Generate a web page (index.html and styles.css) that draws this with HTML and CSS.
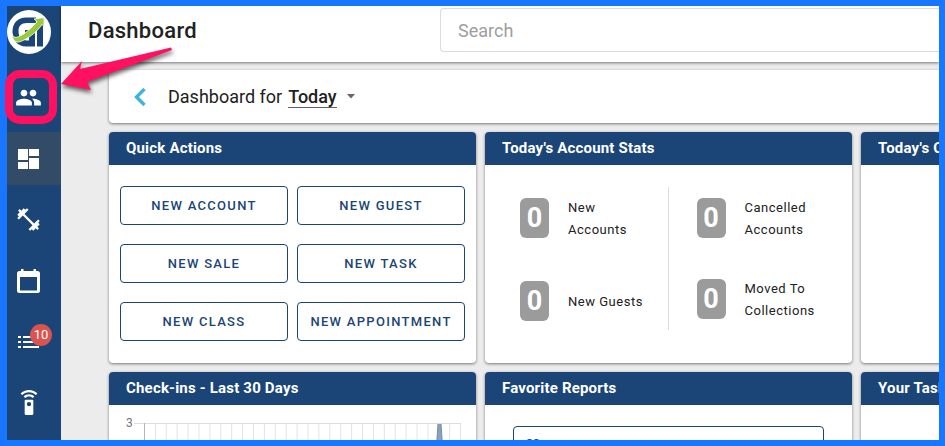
FILE: index.html
```html
<!DOCTYPE html>
<html lang="en">
<head>
<meta charset="utf-8">
<title>Dashboard</title>
<meta name="viewport" content="width=device-width, initial-scale=1">
<link rel="stylesheet" href="styles.css">
</head>
<body>
<div class="frame">
  <nav class="sidebar" aria-label="Main">
    <a class="logo" href="#" aria-label="Home">
      <svg width="44" height="44" viewBox="0 0 44 44">
        <circle cx="22" cy="22" r="22" fill="#fff"/>
        <path d="M29 7.500V13H20C14 13 11.500 16 11.500 21C11.500 27 14.500 30.500 20 30.500H22V25H18V20H28V36.500H19C10.500 36.500 5.500 30 5.500 21.500C5.500 13 11 7.500 19 7.500Z" fill="#1a4576"/>
        <path d="M30 20L36 13V36.500H30Z" fill="#1a4576"/>
        <path d="M5 24C6 33.500 11 33 16 30.500C24 26.500 31 20.500 35 14.500L37 16.500V7.500L27 9L30 11.500C25 18 19 23 13 26C9 28 6.500 28 5 24Z" fill="#9ac93c" stroke="#fff" stroke-width=".8"/>
      </svg>
    </a>
    <a class="item" href="#" aria-label="People">
      <svg width="27" height="27" viewBox="0 0 24 24"><path d="M16 11c1.660 0 2.990-1.340 2.990-3S17.660 5 16 5s-3 1.340-3 3 1.340 3 3 3zm-8 0c1.660 0 2.990-1.340 2.990-3S9.660 5 8 5 5 6.340 5 8s1.340 3 3 3zm0 2c-2.330 0-7 1.170-7 3.500V19h14v-2.500c0-2.330-4.670-3.500-7-3.500zm8 0c-.290 0-.620.020-.970.050 1.160.840 1.970 1.970 1.970 3.450V19h6v-2.500c0-2.330-4.670-3.500-7-3.500z"/></svg>
    </a>
    <a class="item active" href="#" aria-label="Dashboard">
      <svg width="21" height="20" viewBox="0 0 21 20"><path d="M0 0H10V11H0ZM0 13H10V20H0ZM11 0H21V7H11ZM11 9H21V20H11Z"/></svg>
    </a>
    <a class="item" href="#" aria-label="Fitness">
      <svg width="27" height="27" viewBox="0 0 24 24"><path d="M20.570 14.860L22 13.430L20.570 12L17 15.570L8.430 7L12 3.430L10.570 2L9.140 3.430L7.710 2L5.570 4.140L4.140 2.710L2.710 4.140L4.140 5.570L2 7.710L3.430 9.140L2 10.570L3.430 12L7 8.430L15.570 17L12 20.570L13.430 22L14.860 20.570L16.290 22L18.430 19.860L19.860 21.290L21.290 19.860L19.860 18.430L22 16.290Z"/></svg>
    </a>
    <a class="item" href="#" aria-label="Calendar">
      <svg width="23" height="24" viewBox="0 0 23 24"><path fill-rule="evenodd" d="M4 0H6.500V2H16.500V0H19V2H20.500Q23 2 23 4.500V21.500Q23 24 20.500 24H2.500Q0 24 0 21.500V4.500Q0 2 2.500 2H4ZM3 8V21.500H20V8Z"/></svg>
    </a>
    <a class="item" href="#" aria-label="Lists, 10 new">
      <svg width="21" height="12" viewBox="0 0 21 12"><path d="M0 0H3V2H0ZM5 0H21V2H5ZM0 5H3V7H0ZM5 5H21V7H5ZM0 10H3V12H0ZM5 10H21V12H5Z"/></svg>
      <span class="count">10</span>
    </a>
    <a class="item" href="#" aria-label="Remote">
      <svg width="26" height="26" viewBox="0 0 24 24"><path d="M12 0C8.960 0 6.210 1.230 4.220 3.220L5.630 4.630C7.260 3 9.500 2 12 2S16.740 3 18.360 4.640L19.770 3.230C17.790 1.230 15.040 0 12 0M7.050 6.050L8.460 7.460C9.370 6.560 10.620 6 12 6S14.630 6.560 15.540 7.460L16.950 6.050C15.680 4.780 13.930 4 12 4S8.320 4.780 7.050 6.050M12 15A2 2 0 0 1 12 11A2 2 0 0 1 12 15M15 9H9A1 1 0 0 0 8 10V22A1 1 0 0 0 9 23H15A1 1 0 0 0 16 22V10A1 1 0 0 0 15 9Z"/></svg>
    </a>
  </nav>

  <div class="page">
    <header class="topbar">
      <h1>Dashboard</h1>
      <input class="search" type="search" placeholder="Search" aria-label="Search">
    </header>

    <main class="content">
      <section class="period">
        <button class="back" type="button" aria-label="Previous">
          <svg width="12" height="18" viewBox="0 0 12 18"><path d="M10.500 1L2.500 9L10.500 17" fill="none" stroke="#40b4d8" stroke-width="3.400"/></svg>
        </button>
        <span>Dashboard for</span>
        <button class="range" type="button"><span>Today</span>
          <svg width="8" height="5" viewBox="0 0 8 5"><path d="M0 0H8L4 4.500Z" fill="#666"/></svg>
        </button>
      </section>

      <div class="cards">
        <section class="card">
          <h2>Quick Actions</h2>
          <div class="actions">
            <button type="button">NEW ACCOUNT</button>
            <button type="button">NEW GUEST</button>
            <button type="button">NEW SALE</button>
            <button type="button">NEW TASK</button>
            <button type="button">NEW CLASS</button>
            <button type="button">NEW APPOINTMENT</button>
          </div>
        </section>

        <section class="card">
          <h2>Today's Account Stats</h2>
          <div class="stats">
            <div class="column">
              <div class="stat"><b>0</b><span>New Accounts</span></div>
              <div class="stat"><b>0</b><span>New Guests</span></div>
            </div>
            <div class="column">
              <div class="stat"><b>0</b><span>Cancelled Accounts</span></div>
              <div class="stat"><b>0</b><span>Moved To Collections</span></div>
            </div>
          </div>
        </section>

        <section class="card">
          <h2>Today's Classes</h2>
        </section>

        <section class="card">
          <h2>Check-ins - Last 30 Days</h2>
          <div class="chart">
            <span>3</span>
            <svg width="328" height="120" viewBox="0 0 328 120">
              <defs><pattern id="days" x="10" width="10.900" height="120" patternUnits="userSpaceOnUse"><path d="M.5 0V120" stroke="#e2e2e2"/></pattern></defs>
              <rect x="10" width="318" height="120" fill="url(#days)"/>
              <path d="M0 .5H327" stroke="#dcdcdc"/>
              <path d="M10.500 0V120" stroke="#b5b5b5"/>
              <path d="M304 1H307L315 119H296Z" fill="#8ba2ba"/>
              <path d="M304 1L296 119M307 1L315 119" stroke="#6e8cac" fill="none"/>
            </svg>
          </div>
        </section>

        <section class="card">
          <h2>Favorite Reports</h2>
          <div class="reports">
            <button class="report" type="button" aria-label="Favorite report">
              <svg width="16" height="15" viewBox="0 0 16 15"><path d="M8 15L1.500 8.500C-1.500 5 1 0 4.500 0Q7 0 8 2Q9 0 11.500 0C15 0 17.500 5 14.500 8.500Z" fill="#1a4576"/></svg>
            </button>
          </div>
        </section>

        <section class="card">
          <h2>Your Tasks</h2>
        </section>
      </div>
    </main>
  </div>
</div>

<svg class="callout" width="180" height="130" viewBox="0 0 180 130" aria-hidden="true">
  <rect x="9" y="74" width="44" height="46" rx="11" fill="none" stroke="#ff1060" stroke-width="8"/>
  <path class="arrow" d="M61 84L82 61L80 69L171 47.500L172 50L87 82L91 90Z" fill="#ff1060"/>
</svg>
</body>
</html>
```
FILE: styles.css
```css
* {
  box-sizing: border-box;
}

body {
  margin: 0;
  font-family: Roboto, "Liberation Sans", sans-serif;
  color: #212121;
}

button {
  font: inherit;
  cursor: pointer;
}

svg {
  display: block;
  flex: none;
}

.frame {
  display: flex;
  height: 100vh;
  overflow: hidden;
  border: 6px solid #1976ff;
  border-left-width: 7px;
  background: #ececec;
}

.sidebar {
  display: flex;
  flex: none;
  flex-direction: column;
  gap: 8px;
  width: 54px;
  padding-top: 4px;
  background: #1a4576;
}

.logo {
  width: 44px;
  margin-bottom: 9px;
}

.item {
  position: relative;
  display: flex;
  flex: none;
  align-items: center;
  justify-content: center;
  height: 53px;
  padding-right: 11px;
}

.item svg {
  fill: #fff;
}

.item.active {
  background: #324b66;
}

.count {
  position: absolute;
  top: 9px;
  left: 23px;
  width: 22px;
  height: 22px;
  border-radius: 50%;
  background: #d9534f;
  color: #fff;
  font-size: 13px;
  line-height: 22px;
  text-align: center;
}

.page {
  flex: 1;
  min-width: 0;
}

.topbar {
  display: grid;
  grid-template-columns: 352px 1fr;
  align-items: start;
  height: 56px;
  padding: 2px 0 0 27px;
  background: #fff;
  box-shadow: 0 1px 3px rgba(0, 0, 0, 0.5);
}

h1,
h2 {
  margin: 0;
  letter-spacing: 0.0125em;
}

h1 {
  font-size: 22px;
  font-weight: 500;
  line-height: 46px;
}

.search {
  height: 44px;
  padding: 0 17px;
  border: 1px solid #dcdcdc;
  border-right: 0;
  border-radius: 4px 0 0 4px;
  outline: 0;
  background: #fff;
  font: 18px Roboto, sans-serif;
}

.search::placeholder {
  color: #9e9e9e;
}

.content {
  padding: 8px 0 0 48px;
}

.period {
  display: flex;
  align-items: center;
  height: 53px;
  padding-left: 25px;
  border-radius: 4px 0 0 4px;
  background: #fff;
  box-shadow: 0 1px 3px rgba(0, 0, 0, 0.5);
  font-size: 18px;
}

.back {
  margin-right: 22px;
  padding: 0;
  border: 0;
  background: none;
}

.range {
  display: flex;
  align-items: center;
  gap: 10px;
  margin-left: 6px;
  padding: 0;
  border: 0;
  background: none;
  color: inherit;
  font-weight: 500;
}

.range span {
  border-bottom: 1px solid #616161;
}

.cards {
  display: grid;
  grid-template-columns: repeat(3, minmax(367px, 1fr));
  gap: 9px;
  margin-top: 9px;
}

.card {
  overflow: hidden;
  border-radius: 4px;
  background: #fff;
  box-shadow: 0 1px 3px rgba(0, 0, 0, 0.5);
}

h2 {
  padding: 0 17px;
  background: #1a4576;
  color: #fff;
  font-size: 15px;
  font-weight: 700;
  line-height: 33px;
}

.actions {
  display: grid;
  grid-template-columns: 1fr 1fr;
  gap: 19px 9px;
  padding: 21px 11px 22px;
}

.actions button {
  height: 39px;
  padding: 0;
  border: 1px solid #1a4576;
  border-radius: 4px;
  background: #fff;
  color: #1a4576;
  font-size: 13px;
  font-weight: 500;
  letter-spacing: 0.1em;
}

.stats {
  display: grid;
  grid-template-columns: 1fr 1fr;
  padding-top: 22px;
}

.column {
  display: flex;
  flex-direction: column;
  gap: 35px;
  height: 143px;
  padding: 8px 0 0 28px;
}

.column:first-child {
  gap: 38px;
  padding-left: 35px;
  border-right: 1px solid #dcdcdc;
}

.stat {
  display: flex;
  align-items: center;
  gap: 19px;
  min-height: 44px;
}

.stat b {
  width: 29px;
  border-radius: 6px;
  background: #9b9b9b;
  color: #fff;
  font-size: 27px;
  line-height: 40px;
  text-align: center;
}

.stat span {
  width: 80px;
  padding-top: 2px;
  font-size: 13px;
  letter-spacing: 0.04em;
  line-height: 22px;
}

.chart {
  display: flex;
  gap: 1px;
  padding: 18px 0 0 17px;
  color: #757575;
  font-size: 12px;
  line-height: 1;
}

.chart span {
  margin-top: -6px;
}

.reports {
  padding: 21px 28px;
}

.report {
  width: 100%;
  height: 40px;
  padding: 0 11px;
  border: 1px solid #1a4576;
  border-radius: 4px;
  background: #fff;
}

.callout {
  position: absolute;
  top: 0;
  left: 0;
  pointer-events: none;
}

.arrow {
  filter: drop-shadow(1px 3px 2px rgba(0, 0, 0, 0.6));
}
```
